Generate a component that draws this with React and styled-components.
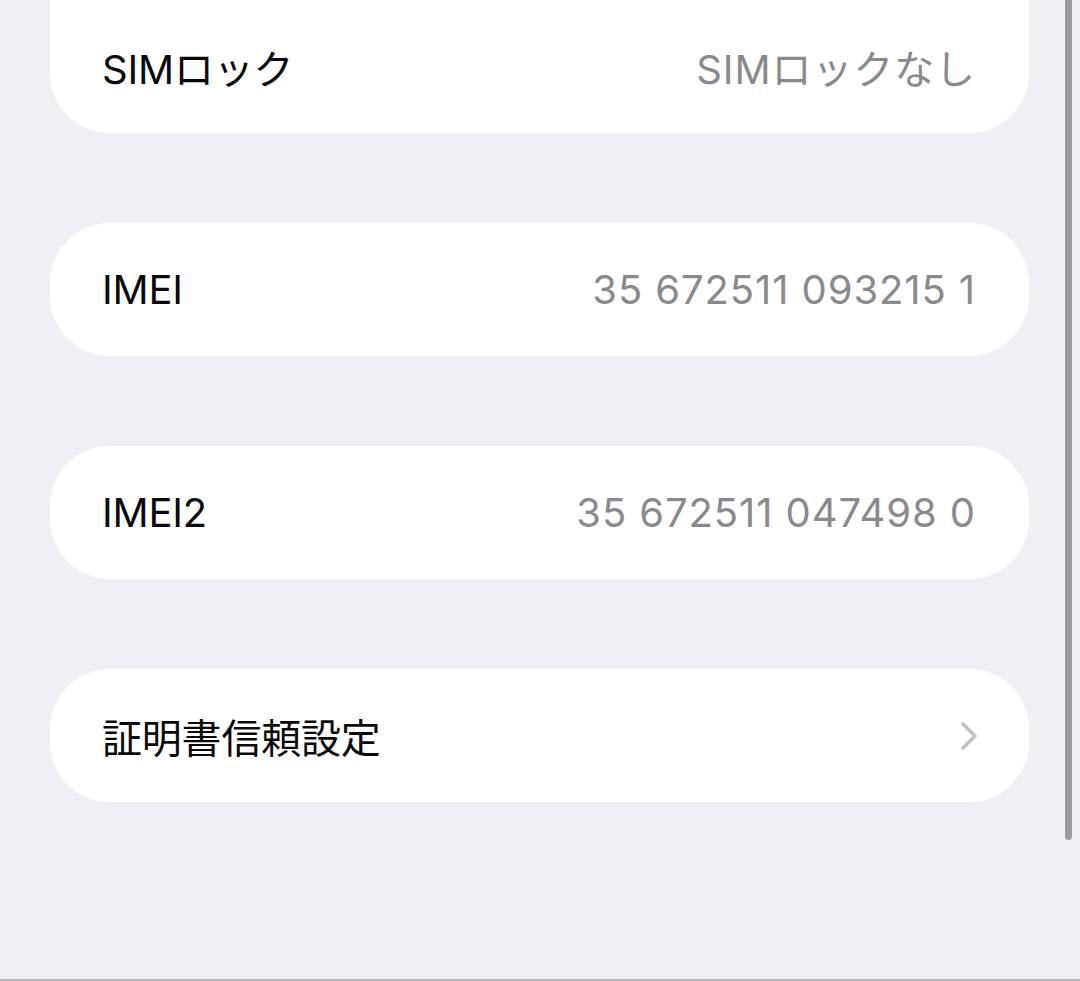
import React from 'react';
import styled, { createGlobalStyle } from 'styled-components';

const GlobalStyle = createGlobalStyle`
    html, body {
        margin: 0;
        padding: 0;
        background: #f0eff5;
    }
    * {
        box-sizing: border-box;
    }
`

const rows = [
    { label: 'IMEI', value: '35 672511 093215 1' },
    { label: 'IMEI2', value: '35 672511 047498 0' },
];

const Chevron = () => (
    <ChevronIcon width="18" height="30" viewBox="0 0 18 30" fill="none">
        <polyline
            points="3,3 15,15 3,27"
            stroke="#c2c2c5"
            strokeWidth="3.8"
            strokeLinecap="round"
            strokeLinejoin="round"
        />
    </ChevronIcon>
);

const App = () => {
    return (
        <>
            <GlobalStyle />
            <Page>
                <List>
                    <Card $groupEnd>
                        <Label>SIMロック</Label>
                        <Value>SIMロックなし</Value>
                    </Card>
                    {rows.map(row => (
                        <Card key={row.label}>
                            <Label>{row.label}</Label>
                            <Value>{row.value}</Value>
                        </Card>
                    ))}
                    <Card>
                        <Label>証明書信頼設定</Label>
                        <Chevron />
                    </Card>
                </List>
                <ScrollThumb />
            </Page>
        </>
    );
}

const Page = styled.div`
    position: relative;
    width: 1080px;
    height: 981px;
    overflow: hidden;
    background: #f0eff5;
    border-bottom: 2px solid #b6b6ba;
    font-family: Inter, "Noto Sans CJK JP", sans-serif;
`

const List = styled.div`
    display: flex;
    flex-direction: column;
    gap: 90px;
    padding-left: 50px;
    width: 1029px;
`

const Card = styled.div`
    height: 133px;
    display: flex;
    align-items: center;
    justify-content: space-between;
    padding: 0 53px 0 52px;
    background: #ffffff;
    border-radius: ${props => props.$groupEnd ? '0 0 60px 60px' : '60px'};
`

const Label = styled.span`
    font-size: 40px;
    color: #0a0a0a;
    letter-spacing: -0.2px;
`

const Value = styled.span`
    font-size: 40px;
    color: #8a8a8e;
    letter-spacing: 0.9px;
`

const ChevronIcon = styled.svg`
    margin-right: -2px;
`

const ScrollThumb = styled.div`
    position: absolute;
    top: -20px;
    left: 1065px;
    width: 7px;
    height: 860px;
    border-radius: 4px;
    background: #9b9a9f;
`

export default App;
